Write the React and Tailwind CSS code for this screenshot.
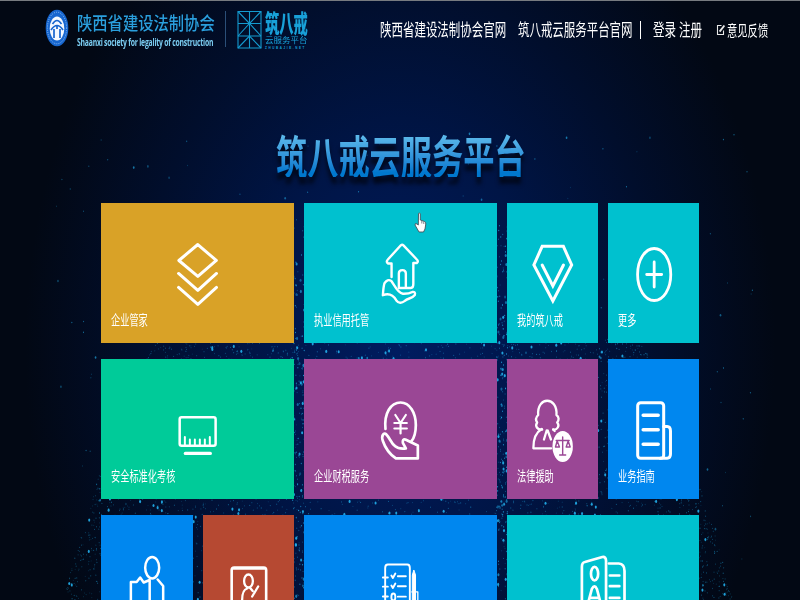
import React from "react";

const CJK = "font-['Noto_Sans_CJK_SC',sans-serif]";

// Narrow CJK text: each glyph is squeezed to `advance` pixels.
function Narrow({ text, size, advance, className = "" }) {
  return (
    <span className={`block whitespace-nowrap ${className}`} style={{ width: text.length * advance }}>
      <span
        className="block w-max origin-left leading-none"
        style={{ fontSize: size, transform: `scaleX(${advance / size})` }}
      >
        {text}
      </span>
    </span>
  );
}

function makeParticles() {
  let seed = 77;
  const rnd = () => {
    seed = (seed * 1664525 + 1013904223) % 4294967296;
    return seed / 4294967296;
  };
  const dots = [];
  const add = (x, y, r, o) => dots.push({ x, y, r, o });
  // dense dome
  for (let i = 0; i < 5200; i++) {
    const y = 338 + rnd() * 262;
    const half = 235 + 100 * Math.pow((y - 338) / 262, 0.7);
    const side = rnd() < 0.5 ? -1 : 1;
    const t = Math.pow(rnd(), 1.3);
    const big = rnd() < 0.14 * (0.15 + t);
    add(398 + side * half * (1 - t), y, big ? 1.2 : 0.5, big ? 0.9 : 0.2 + rnd() * 0.4);
  }
  // inner columns
  for (let i = 0; i < 320; i++) {
    const x = rnd() < 0.5 ? 292 + rnd() * 14 : 496 + rnd() * 12;
    const y = 225 + rnd() * 375;
    add(x, y, rnd() < 0.2 ? 1.2 : 0.6, 0.3 + rnd() * 0.6);
  }
  // sparse stars
  for (let i = 0; i < 230; i++) {
    add(55 + rnd() * 700, 130 + rnd() * 470, rnd() < 0.25 ? 1 : 0.6, 0.2 + rnd() * 0.5);
  }
  return dots;
}
const particles = makeParticles();

function Backdrop() {
  return (
    <svg className="absolute inset-0" width="800" height="600" viewBox="0 0 800 600" aria-hidden="true">
      <defs>
        <radialGradient id="glow" gradientUnits="userSpaceOnUse" cx="0" cy="0" r="1" gradientTransform="translate(400 350) scale(375 520)">
          <stop offset="0" stopColor="#001c60" />
          <stop offset="0.4" stopColor="#001546" />
          <stop offset="0.7" stopColor="#010e2c" />
          <stop offset="1" stopColor="#020814" />
        </radialGradient>
      </defs>
      <rect width="800" height="600" fill="url(#glow)" />
      {particles.map((p, i) => (
        <ellipse key={i} cx={p.x} cy={p.y} rx={p.r * 0.85} ry={p.r * 1.3} fill="#22b0ec" opacity={p.o} />
      ))}
    </svg>
  );
}

function Seal() {
  return (
    <svg width="24" height="38" viewBox="45 9 24 38" className="block">
      <ellipse cx="57" cy="28" rx="11.3" ry="18.3" fill="#1766cf" />
      <ellipse cx="57" cy="28" rx="9.600" ry="15.800" fill="none" stroke="#8fbdf3" strokeWidth="1" strokeDasharray="1 1.2" />
      <ellipse cx="57" cy="28.500" rx="7.300" ry="12" fill="#f4f9ff" />
      <path d="M52.500 24Q57 17 61.500 24M51 30Q57 21 63 30M54 29V38M60 29V38M57 26V29" fill="none" stroke="#1766cf" strokeWidth="1.700" />
    </svg>
  );
}

function Lattice() {
  return (
    <svg width="26" height="39" viewBox="237 10 26 39" className="block">
      <g fill="none" stroke="#149bd0" strokeWidth="1.1">
        <path d="M238 11.500H261V48H238ZM249.500 11.500V48M238 23.500H261M238 36H261" />
        <path d="M238 11.500L249.500 23.500L261 11.500M238 36L249.500 23.500L261 36M238 48L249.500 36L261 48" />
      </g>
    </svg>
  );
}

function Header() {
  return (
    <header className="relative flex h-[60px] items-start border-t border-[#777b80] pl-[45px] text-white">
      <div className="mt-[8px]"><Seal /></div>
      <div className="ml-[8px] mt-[12px] w-[140px] text-[#2a9fdd]">
        <Narrow text="陕西省建设法制协会" size={18} advance={15.3} className="h-[22px] font-medium" />
        <span className="block w-max origin-left scale-x-[0.682] whitespace-nowrap font-['Open_Sans',sans-serif] text-[10px] leading-[14px] font-bold tracking-[-0.3px] text-[#7bcdf2]">
          Shaanxi society for legality of construction
        </span>
      </div>
      <div className="ml-[8px] mt-[10px] h-[36px] w-px bg-[#2b4f78]" />
      <div className="mt-[9px] ml-[11px]"><Lattice /></div>
      <div className="ml-[2px] mt-[9px] w-[45px] text-[#18a0d8]">
        <Narrow text="筑八戒" size={25} advance={14.3} className="h-[26px] font-black" />
        <Narrow text="云服务平台" size={8} advance={8.5} className="h-[11px]" />
        <span className="block w-max font-['Liberation_Sans',sans-serif] text-[3px] leading-[3px] font-bold tracking-[1.6px]">ZHUBAJIE.NET</span>
      </div>
      <nav className="ml-[70px] mt-[19px] flex items-start">
        <Narrow text="陕西省建设法制协会官网" size={17} advance={11.47} />
        <Narrow text="筑八戒云服务平台官网" size={17} advance={11.45} className="ml-[11.500px]" />
        <span className="ml-[8px] mt-px h-[18px] w-px bg-white" />
        <Narrow text="登录" size={17} advance={11.5} className="ml-[12px]" />
        <Narrow text="注册" size={17} advance={11.5} className="ml-[3px]" />
        <svg width="10" height="14" viewBox="0 0 10 14" className="mt-[3px] ml-[14px] block" fill="none" stroke="#e8e8e8" strokeWidth="1.1">
          <path d="M5.500 2.500H1.500V11.500H7.500V7.500" />
          <path d="M3.600 8.600L8.400 2.500" strokeWidth="1.900" />
        </svg>
        <Narrow text="意见反馈" size={15} advance={10.3} className="ml-[1px] mt-[2px]" />
      </nav>
    </header>
  );
}

const icons = {
  layers: (
    <path d="M198 244.500L216.500 260.500L198 276.500L179 260.500ZM178.700 273.500L198 290.500L216.700 273.500M178.700 287.500L198 304.500L216.700 287.500" />
  ),
  house: (
    <g strokeWidth="2.4">
      <path d="M391.700 277V263.500H388Q386 261.500 388 259.500L401 245.300Q402.300 244 403.600 245.300L417 259.500Q419 261.500 417 263H413.500V284Q413.500 288 411 288H399V273.500C399 269 406 269 406 273.500V287" />
      <path d="M383 295.300Q383.500 287 384.500 283.500Q387.500 278.500 391.500 281C394.500 285 397.500 293 403 293.800Q409 294 412.500 292Q416 291.500 415 295C412 299 408 298 405 301Q400 305 396.500 300.500Q391.500 292 383 295.300Z" />
    </g>
  ),
  gem: (
    <g strokeLinejoin="miter">
      <path d="M542 246.300H563.200L571.500 265L552.700 301L533.700 265Z" />
      <path d="M542 265L552.700 286L563.300 265" />
    </g>
  ),
  plus: (
    <g>
      <ellipse cx="654" cy="274.500" rx="16.600" ry="26" strokeWidth="2.800" />
      <path d="M654 262V287M646.500 274.500H661.500" strokeWidth="2.800" />
    </g>
  ),
  monitor: (
    <g>
      <rect x="179.800" y="417.200" width="36" height="28.500" rx="2" strokeWidth="2.500" />
      <path d="M185 437V445M190 439.500V445M195 439.500V445M200 439.500V445M205 439.500V445M210 437V445" strokeWidth="2" />
      <path d="M185.500 453.500H210.500" strokeWidth="3.300" />
    </g>
  ),
  coin: (
    <g strokeWidth="2.700">
      <path d="M385.600 429C384 413 391 402.500 400.700 402.500C410 402.500 416 413 416 425Q416 436 411.500 441.500" />
      <path d="M395.500 415L400.700 423L406 415M400.700 423V433.500M394.500 423H407M394.500 428.500H407" strokeWidth="2.200" />
      <path d="M386.500 434.500C384 432 381 435.500 383 441C386 450 391 455 396 458.500H418V445.500L405.500 439.500Q402.500 439 403 443L406 448.500Q399 449.500 395 446C391 443 390 438 386.500 434.500Z" />
    </g>
  ),
  judge: (
    <g strokeWidth="2.300">
      <path d="M542 429.500C537 430 534.500 426 537 422.500C534.500 419 536 417 538 415C536.500 396 557.500 396 556.300 415C559 417 559 420 557 422.500C560 426 557 430 553 429.500" />
      <path d="M541.500 429Q533 434 533.200 448.300H551M543.800 439.500L546.500 430.500M547.500 430.500L550.800 439.500M553 429.500L554.500 431" />
      <ellipse cx="562.500" cy="446.500" rx="10.200" ry="15.500" fill="white" stroke="none" />
      <path d="M562.500 437V455M559.500 455H565.500M556 440.500H569M557 441L555.300 447H559.300L557 441M568 441L566 447H570L568 441" stroke="#9a4795" strokeWidth="1.400" />
    </g>
  ),
  doc: (
    <g>
      <rect x="637.500" y="402.700" width="26" height="55.500" rx="3" />
      <path d="M663.500 426.500H667Q670.300 426.500 670.300 431V454Q670.300 458.200 667 458.200H660" />
      <path d="M643 415.300H658M643 429.800H658M643 444.300H658" strokeWidth="3.500" />
    </g>
  ),
  person: (
    <g strokeWidth="2.500">
      <ellipse cx="152" cy="567.700" rx="7" ry="10.700" />
      <path d="M157.500 579.500L163 586V620M130.700 620V582H136.500L140 577.500L143.500 582.500L149.500 580V620" />
    </g>
  ),
  portrait: (
    <g strokeWidth="2.300">
      <path d="M231.500 620V570Q231.500 567.500 234 567.500H263.500Q266 567.500 266 570V620M232 568.500H265.500" strokeWidth="2.600" />
      <ellipse cx="248.300" cy="581" rx="4.400" ry="6.500" />
      <path d="M242 602Q241.500 590 247 588.500M250 588L252.500 591M258 586.500L252 596.500" />
    </g>
  ),
  checklist: (
    <g strokeWidth="1.900">
      <path d="M385.300 620V568Q385.300 564.500 388 564.500H407.500Q410 564.500 410 568V620" strokeWidth="1.900" />
      <path d="M383 577.500H388M383 586.700H388M383 596.500H388M391.500 575.500L393 578L395.500 573.500M391.500 585.500L393 588L395.500 583.500M398 576.300H406M398 586.300H406M398 596.700H406" />
      <ellipse cx="393.500" cy="597" rx="2" ry="3.500" />
      <path d="M412.500 620V575L414 570L415.700 575V620Z" fill="white" strokeWidth="1" />
      <path d="M412 592H418V620" strokeWidth="1.300" />
    </g>
  ),
  idcard: (
    <g strokeWidth="2.700">
      <path d="M582 620V567Q582 562.500 585 562L602.500 557Q606.200 556.500 606.200 561V620" />
      <path d="M609 563.500H619Q624.700 564 624.700 571V620M610 575.500H619.500M610 586.200H619.500M610 598H619.500" />
      <ellipse cx="594.700" cy="573.700" rx="3.600" ry="6.800" />
      <path d="M588.500 602L592 589Q594.700 584 597 589L600.500 602M591 598H598" />
    </g>
  ),
};

const tiles = [
  { label: "企业管家", icon: "layers", box: "101 203 193 105", cls: "col-span-2 bg-[#d9a227]" },
  { label: "执业信用托管", icon: "house", box: "304 203 193 105", cls: "col-span-2 bg-[#00c1cf]" },
  { label: "我的筑八戒", icon: "gem", box: "507 203 91 105", cls: "bg-[#00c1cf]" },
  { label: "更多", icon: "plus", box: "608 203 91 105", cls: "bg-[#00c1cf]" },
  { label: "安全标准化考核", icon: "monitor", box: "101 359 193 105", cls: "col-span-2 bg-[#00cb99]" },
  { label: "企业财税服务", icon: "coin", box: "304 359 193 105", cls: "col-span-2 bg-[#9a4795]" },
  { label: "法律援助", icon: "judge", box: "507 359 91 105", cls: "bg-[#9a4795]" },
  { label: "业务指南", icon: "doc", box: "608 359 91 105", cls: "bg-[#0087ef]" },
  { label: "", icon: "person", box: "101 515 91 105", cls: "bg-[#0087ef]" },
  { label: "", icon: "portrait", box: "203 515 91 105", cls: "bg-[#b64932]" },
  { label: "", icon: "checklist", box: "304 515 193 105", cls: "col-span-2 bg-[#0087ef]" },
  { label: "", icon: "idcard", box: "507 515 193 105", cls: "col-span-2 bg-[#00c1cf]" },
];

function Tile({ label, icon, box, cls }) {
  return (
    <div className={`h-[140.400px] overflow-hidden ${cls}`}>
      <svg className="block h-[105px] w-full" viewBox={box} fill="none" stroke="white" strokeWidth="3" strokeLinecap="round" strokeLinejoin="round">
        {icons[icon]}
      </svg>
      {label && <Narrow text={label} size={14} advance={9.2} className="mt-[4px] ml-[10px] text-white" />}
    </div>
  );
}

export default function App() {
  return (
    <div className={`relative h-[600px] w-[800px] overflow-hidden bg-[#020814] ${CJK}`}>
      <Backdrop />
      <Header />
      <main className="relative">
        <h1 className="ml-[276px] h-[143px] pt-[71px] drop-shadow-[0_7px_2px_rgba(0,5,20,0.9)]">
          <Narrow
            text="筑八戒云服务平台"
            size={46}
            advance={31.2}
            className="font-bold [&>span]:bg-linear-to-b [&>span]:from-[#5bb9ea] [&>span]:from-10% [&>span]:to-[#0078cf] [&>span]:to-90% [&>span]:bg-clip-text [&>span]:text-transparent"
          />
        </h1>
        <div className="ml-[101.300px] grid w-[598.100px] grid-cols-6 gap-x-[10px] gap-y-[15.600px]">
          {tiles.map((t) => (
            <Tile key={t.icon} {...t} />
          ))}
        </div>
      </main>
      <svg className="absolute top-[212px] left-[414px]" width="13" height="21" viewBox="0 0 13 21">
        <path d="M4.500 1.500Q5.800 0 6.300 2V8L10.500 9.500Q12 10 11.800 12L11 17L9.500 20H5L1 13Q1 10.500 3 12L4.300 13Z" fill="white" stroke="#45505a" strokeWidth="0.900" />
        <path d="M7.800 9V11.500M9.800 9.800V12" stroke="#45505a" strokeWidth="0.700" />
      </svg>
    </div>
  );
}
